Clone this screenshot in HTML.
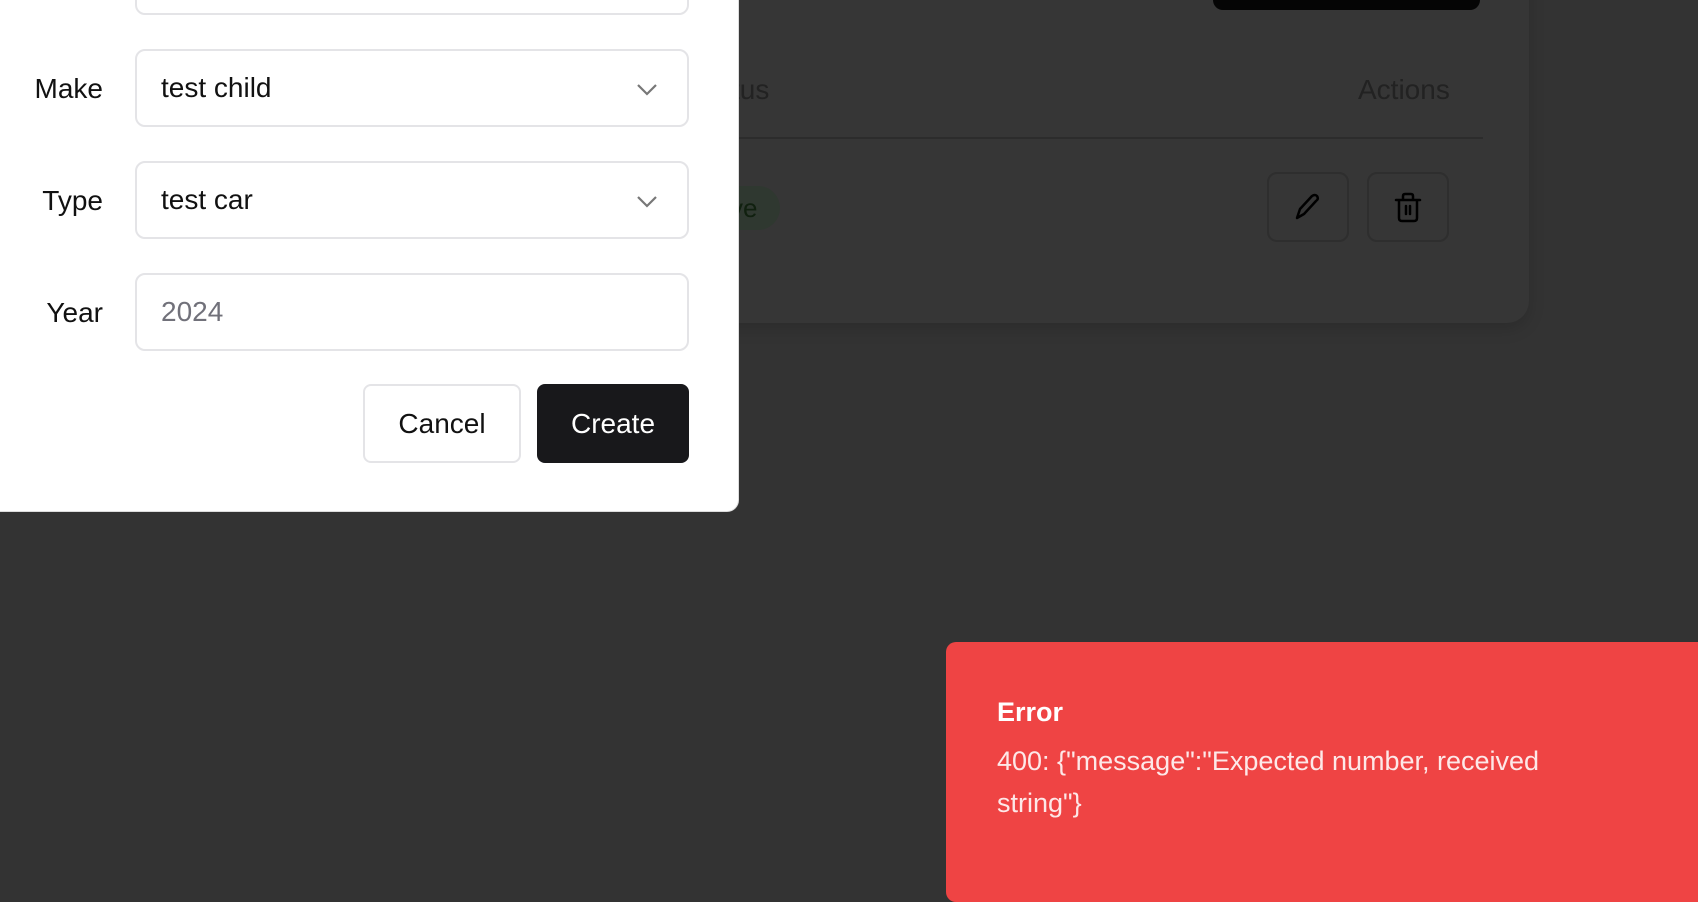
<!DOCTYPE html>
<html><head><meta charset="utf-8"><style>
*{box-sizing:border-box;margin:0;padding:0}
body{width:1698px;height:868px;background:#333333;position:relative;overflow:hidden;font-family:"Liberation Sans",sans-serif}
.abs{position:absolute}
.card{left:600px;top:-40px;width:929px;height:363px;background:#363636;border-radius:22px;box-shadow:0 6px 16px rgba(0,0,0,.15)}
.modal{left:-20px;top:-30px;width:759px;height:542px;background:#fff;border-radius:12px;border:1px solid #ddd}
.lbl{font-size:28px;color:#111;text-align:right;width:103px;left:0}
.inp{left:135px;width:554px;height:78px;border:2px solid #e4e4e7;border-radius:10px;background:#fff;font-size:28px;color:#111;padding-left:24px;line-height:74px}
.chev{position:absolute;right:28px;top:26px}
.btn{height:79px;border-radius:8px;font-size:28px;line-height:79px;text-align:center}
.ib{width:82px;height:70px;border:2px solid #2e2e2e;border-radius:10px}
</style></head><body>
<div class="abs card"></div>
<div class="abs" style="left:1213px;top:-20px;width:267px;height:30px;background:#050505;border-radius:10px"></div>
<div class="abs" style="left:690px;top:74px;font-size:28px;color:#222">Status</div>
<div class="abs" style="left:1358px;top:74px;font-size:28px;color:#222">Actions</div>
<div class="abs" style="left:600px;top:137px;width:883px;height:2px;background:#2c2c2c"></div>
<div class="abs" style="left:680px;top:186px;width:100px;height:44px;border-radius:22px;background:#2f3830;color:#10200f;font-size:26px;line-height:44px;padding-left:50px">ve</div>
<div class="abs ib" style="left:1267px;top:172px"><svg width="82" height="70" viewBox="0 0 82 70" style="position:absolute;left:-2px;top:-2px"><path d="M30 46 L33 37 L45 24 Q48 22 50 24 Q52 27 49 29 L37 42 Z" fill="none" stroke="#000" stroke-width="2.5" stroke-linejoin="round"/></svg></div>
<div class="abs ib" style="left:1367px;top:172px"><svg width="82" height="70" viewBox="0 0 82 70" style="position:absolute;left:-2px;top:-2px"><path d="M29 28 H53 M36 28 V24 Q36 22 38 22 H44 Q46 22 46 24 V28 M32 28 V46 Q32 49 35 49 H47 Q50 49 50 46 V28 M39 34 V42 M43 34 V42" fill="none" stroke="#000" stroke-width="2.5" stroke-linecap="round"/></svg></div>
<div class="abs modal"></div>
<div class="abs inp" style="top:-63px"></div>
<div class="abs lbl" style="top:73px">Make</div>
<div class="abs inp" style="top:49px">test child<svg class="chev" width="24" height="24" viewBox="0 0 24 24"><path d="M3 8 L12 17 L21 8" fill="none" stroke="#777" stroke-width="2.2"/></svg></div>
<div class="abs lbl" style="top:185px">Type</div>
<div class="abs inp" style="top:161px">test car<svg class="chev" width="24" height="24" viewBox="0 0 24 24"><path d="M3 8 L12 17 L21 8" fill="none" stroke="#777" stroke-width="2.2"/></svg></div>
<div class="abs lbl" style="top:297px">Year</div>
<div class="abs inp" style="top:273px;color:#71717a">2024</div>
<div class="abs btn" style="left:363px;top:384px;width:158px;border:2px solid #e4e4e7;line-height:75px;color:#111">Cancel</div>
<div class="abs btn" style="left:537px;top:384px;width:152px;background:#18181b;color:#fff">Create</div>
<div class="abs" style="left:946px;top:642px;width:800px;height:260px;background:#ef4444;border-radius:10px"></div>
<div class="abs" style="left:997px;top:697px;font-size:27px;font-weight:bold;color:#fff">Error</div>
<div class="abs" style="left:997px;top:740px;width:610px;font-size:27px;line-height:42px;color:#fde8e8">400: {"message":"Expected number, received string"}</div>
</body></html>
